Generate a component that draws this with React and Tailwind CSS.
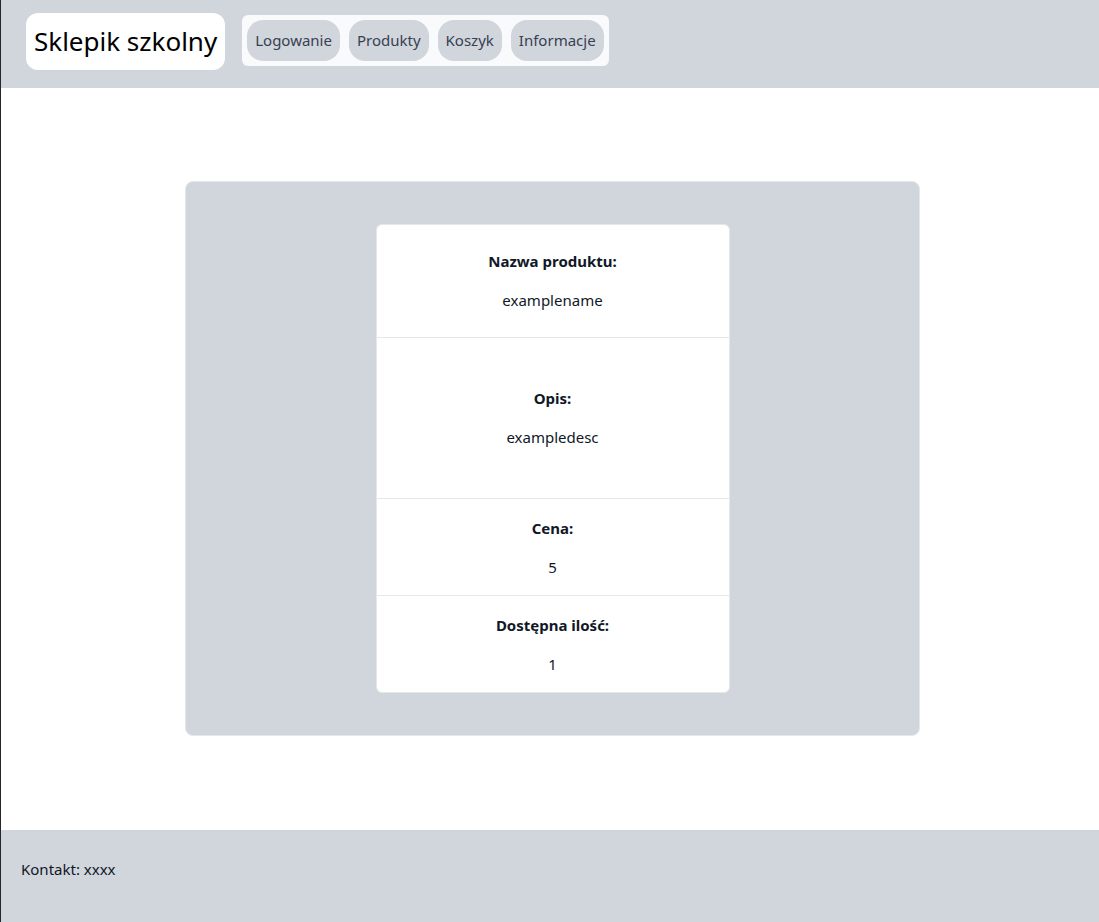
export default function App() {
  const font = { fontFamily: '"Noto Sans", "Open Sans", sans-serif' };
  const sections = [
    { label: "Nazwa produktu:", value: "examplename", cls: "pt-[24px] pb-[25px]" },
    { label: "Opis:", value: "exampledesc", cls: "pt-[48px] pb-[49px]" },
    { label: "Cena:", value: "5", cls: "pt-[17px] pb-[16px]" },
    { label: "Dostępna ilość:", value: "1", cls: "pt-[17px] pb-[16px]" },
  ];
  const nav = ["Logowanie", "Produkty", "Koszyk", "Informacje"];
  return (
    <div className="min-h-screen w-full border-l border-[#262626] flex flex-col bg-white" style={font}>
      <header className="h-[88px] bg-gray-300 flex items-start pl-[25px] pt-[13px] gap-[17px]">
        <div className="bg-white rounded-xl px-2 h-[57px] flex items-center text-[26px] text-black">
          Sklepik szkolny
        </div>
        <nav className="mt-[2px] bg-gray-50 rounded-md p-[5px] flex gap-[9px]">
          {nav.map((n) => (
            <button key={n} className="bg-gray-300 rounded-2xl h-[41px] px-[8px] text-[15px] text-gray-700">
              {n}
            </button>
          ))}
        </nav>
      </header>
      <main className="h-[742px] flex items-start pt-[93px]">
        <div className="ml-[184px] w-[735px] h-[555px] bg-gray-300 border border-gray-200 rounded-lg flex items-start justify-center pt-[42px]">
          <div className="w-[354px] bg-white border border-gray-200 rounded-md flex flex-col divide-y divide-gray-200">
            {sections.map((s) => (
              <div key={s.label} className={`flex flex-col items-center gap-[15px] text-[15px] leading-6 ${s.cls}`}>
                <div className="font-bold text-gray-900">{s.label}</div>
                <div className="text-gray-900">{s.value}</div>
              </div>
            ))}
          </div>
        </div>
      </main>
      <footer className="h-[92px] bg-gray-300 pl-[20px] pt-[27px] text-[15px] leading-6 text-gray-900">
        Kontakt: xxxx
      </footer>
    </div>
  );
}
